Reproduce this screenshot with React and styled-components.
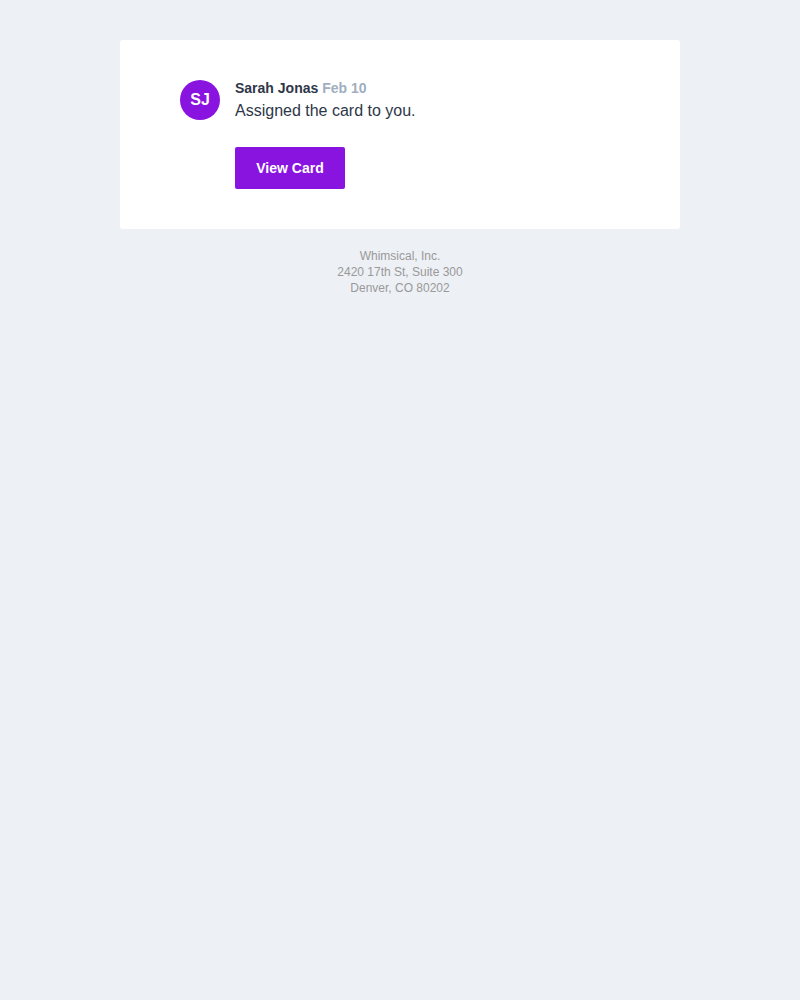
import React from 'react';
import styled, { createGlobalStyle } from 'styled-components';

const GlobalStyle = createGlobalStyle`
  html, body {
    margin: 0;
    padding: 0;
    background: #edf0f5;
    font-family: "Liberation Sans", Arial, sans-serif;
  }
`;

const Page = styled.div`
  min-height: 1000px;
  padding-top: 40px;
  box-sizing: border-box;
`;

const Card = styled.div`
  width: 560px;
  margin: 0 auto;
  background: #ffffff;
  border-radius: 3px;
  padding: 40px 60px;
  box-sizing: border-box;
  display: flex;
  gap: 15px;
`;

const Avatar = styled.div`
  flex: none;
  width: 40px;
  height: 40px;
  border-radius: 50%;
  background: #8a14df;
  color: #ffffff;
  font-size: 16px;
  font-weight: bold;
  display: flex;
  align-items: center;
  justify-content: center;
`;

const Body = styled.div`
  display: flex;
  flex-direction: column;
  align-items: flex-start;
`;

const Meta = styled.div`
  font-size: 14px;
  line-height: 16px;
  font-weight: bold;
  color: #2d3748;
`;

const Date = styled.span`
  color: #a0aec0;
`;

const Message = styled.div`
  font-size: 16px;
  line-height: 20px;
  margin-top: 5px;
  color: #2d3748;
`;

const Button = styled.a`
  margin-top: 26px;
  width: 110px;
  height: 42px;
  display: flex;
  align-items: center;
  justify-content: center;
  background: #8a14df;
  color: #ffffff;
  border-radius: 2px;
  font-size: 14px;
  font-weight: bold;
  text-decoration: none;
`;

const Footer = styled.div`
  margin-top: 19px;
  text-align: center;
  font-size: 12px;
  line-height: 16px;
  color: #999999;
`;

export default function App() {
  return (
    <Page>
      <GlobalStyle />
      <Card>
        <Avatar>SJ</Avatar>
        <Body>
          <Meta>
            Sarah Jonas <Date>Feb 10</Date>
          </Meta>
          <Message>Assigned the card to you.</Message>
          <Button href="#">View Card</Button>
        </Body>
      </Card>
      <Footer>
        <div>Whimsical, Inc.</div>
        <div>2420 17th St, Suite 300</div>
        <div>Denver, CO 80202</div>
      </Footer>
    </Page>
  );
}
